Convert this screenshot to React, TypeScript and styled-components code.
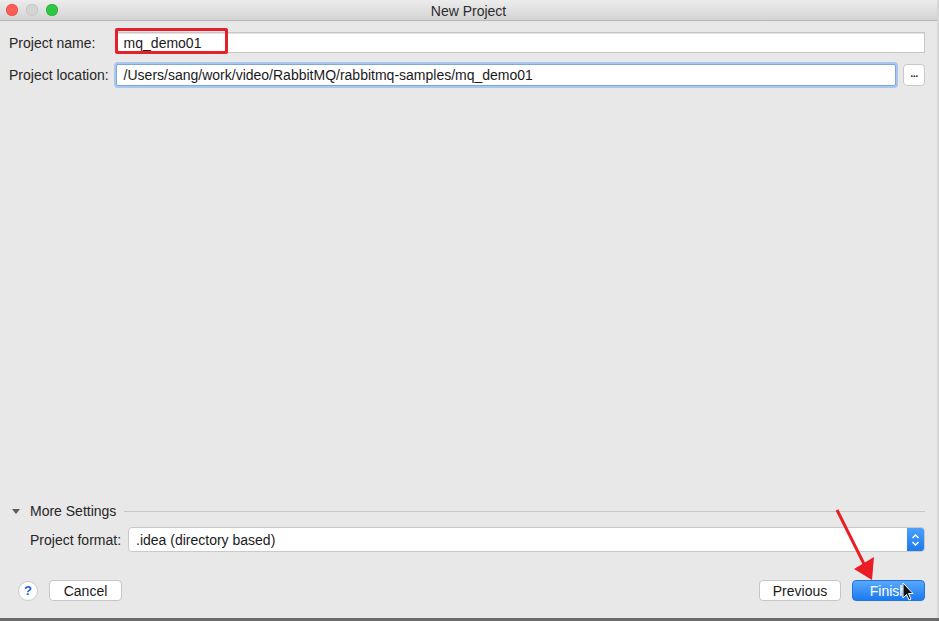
import React from 'react';
import styled, { createGlobalStyle } from 'styled-components';

const GlobalStyle = createGlobalStyle`
  html, body {
    margin: 0;
    padding: 0;
    background: #d6d6d6;
  }
  body {
    font-family: "Liberation Sans", Arial, sans-serif;
    font-size: 14px;
    color: #1e1e1e;
  }
`;

const Page = styled.div`
  position: relative;
  width: 939px;
  height: 621px;
  display: flex;
  flex-direction: column;
  overflow: hidden;
`;

const Window = styled.div`
  width: 937px;
  height: 618px;
  background: #e8e8e8;
  display: flex;
  flex-direction: column;
`;

const BottomEdge = styled.div`
  height: 3px;
  background: #6b6b6b;
`;

const TitleBar = styled.div`
  position: relative;
  height: 20px;
  flex-shrink: 0;
  background: linear-gradient(#ececec, #d4d4d4);
  border-bottom: 1px solid #b5b5b5;
  display: flex;
  align-items: center;
  justify-content: center;
`;

const Lights = styled.div`
  position: absolute;
  left: 6px;
  top: 4px;
  display: flex;
  gap: 8px;
`;

const Light = styled.span<{ color: string; border: string }>`
  width: 12px;
  height: 12px;
  border-radius: 50%;
  background: ${(p) => p.color};
  box-shadow: inset 0 0 0 0.5px ${(p) => p.border};
`;

const Title = styled.div`
  font-size: 14px;
  color: #2c2c2c;
  padding-top: 1px;
`;

const Content = styled.div`
  flex: 1;
  display: flex;
  flex-direction: column;
  padding: 11px 12px 0 9px;
`;

const FormGrid = styled.div`
  display: grid;
  grid-template-columns: auto 1fr 22px;
  column-gap: 7px;
  row-gap: 11px;
  align-items: center;
`;

const Label = styled.label`
  font-size: 14px;
  color: #262626;
  white-space: nowrap;
`;

const FieldWrap = styled.div<{ span?: boolean }>`
  position: relative;
  grid-column: ${(p) => (p.span ? '2 / 4' : '2 / 3')};
`;

const TextField = styled.div<{ focused?: boolean }>`
  height: ${(p) => (p.focused ? '20px' : '19px')};
  background: #fff;
  border: 1px solid ${(p) => (p.focused ? '#7fa8dc' : '#c6c6c6')};
  box-shadow: ${(p) => (p.focused ? '0 0 0 2px #a9c7ee' : 'inset 0 1px 0 #e2e2e2')};
  border-radius: ${(p) => (p.focused ? '2px' : '0')};
  display: flex;
  align-items: center;
  padding: 0 7px;
  font-size: 14px;
  color: #1a1a1a;
  white-space: nowrap;
`;

const Highlight = styled.div`
  position: absolute;
  left: -1px;
  top: -4px;
  width: 107px;
  height: 20px;
  border: 3px solid #e5202b;
  border-radius: 2px;
`;

const SmallButton = styled.button`
  width: 22px;
  height: 22px;
  padding: 0 0 6px;
  background: #fff;
  border: 1px solid #c9c9c9;
  border-radius: 4px;
  font-family: inherit;
  font-size: 11px;
  font-weight: bold;
  color: #333;
  line-height: 1;
  letter-spacing: -0.5px;
  display: flex;
  align-items: flex-end;
  justify-content: center;
`;

const Spacer = styled.div`
  flex: 1;
`;

const SectionHeader = styled.div`
  display: flex;
  align-items: center;
  gap: 6px;
  margin-left: 3px;
`;

const Triangle = styled.span`
  width: 0;
  height: 0;
  border-left: 4px solid transparent;
  border-right: 4px solid transparent;
  border-top: 5px solid #5a5a5a;
  margin-right: 4px;
`;

const SectionTitle = styled.span`
  font-size: 14px;
  color: #262626;
`;

const Rule = styled.div`
  flex: 1;
  height: 1px;
  background: #c6c6c6;
  margin-left: 2px;
`;

const FormatRow = styled.div`
  display: flex;
  align-items: center;
  gap: 7px;
  margin: 8px 0 0 21px;
`;

const Combo = styled.div`
  flex: 1;
  height: 23px;
  background: #fff;
  border: 1px solid #c9c9c9;
  border-radius: 4px;
  display: flex;
  align-items: center;
  overflow: hidden;
`;

const ComboText = styled.span`
  flex: 1;
  padding-left: 7px;
  font-size: 14px;
  color: #1a1a1a;
`;

const Stepper = styled.span`
  width: 17px;
  height: 100%;
  background: linear-gradient(#4ba0fb, #1c79ee);
  display: flex;
  align-items: center;
  justify-content: center;
`;

const Footer = styled.div`
  display: flex;
  align-items: center;
  gap: 11px;
  margin: 28px 0 17px 9px;
`;

const HelpButton = styled.span`
  width: 20px;
  height: 20px;
  border-radius: 50%;
  background: #fff;
  border: 1px solid #c9c9c9;
  box-sizing: border-box;
  display: flex;
  align-items: center;
  justify-content: center;
  font-weight: bold;
  font-size: 13px;
  color: #1d5bd6;
`;

const PushButton = styled.button<{ primary?: boolean; w: number }>`
  width: ${(p) => p.w}px;
  height: 21px;
  border-radius: 4px;
  border: 1px solid ${(p) => (p.primary ? '#1f72e0' : '#c6c6c6')};
  background: ${(p) => (p.primary ? 'linear-gradient(#5aa8fc, #1a7af2)' : '#fff')};
  color: ${(p) => (p.primary ? '#fff' : '#1a1a1a')};
  font-family: inherit;
  font-size: 14px;
  padding: 0;
`;

const FooterGap = styled.div`
  flex: 1;
`;

const Overlay = styled.svg`
  position: absolute;
  left: 0;
  top: 0;
  pointer-events: none;
`;

export default function App() {
  return (
    <Page>
      <GlobalStyle />
      <Window>
        <TitleBar>
          <Lights>
            <Light color="#fc5f57" border="#de4740" />
            <Light color="#d4d4d4" border="#bdbdbd" />
            <Light color="#2fc742" border="#22a532" />
          </Lights>
          <Title>New Project</Title>
        </TitleBar>
        <Content>
          <FormGrid>
            <Label>Project name:</Label>
            <FieldWrap span>
              <TextField>mq_demo01</TextField>
              <Highlight />
            </FieldWrap>
            <Label>Project location:</Label>
            <FieldWrap>
              <TextField focused>/Users/sang/work/video/RabbitMQ/rabbitmq-samples/mq_demo01</TextField>
            </FieldWrap>
            <SmallButton>...</SmallButton>
          </FormGrid>
          <Spacer />
          <SectionHeader>
            <Triangle />
            <SectionTitle>More Settings</SectionTitle>
            <Rule />
          </SectionHeader>
          <FormatRow>
            <Label>Project format:</Label>
            <Combo>
              <ComboText>.idea (directory based)</ComboText>
              <Stepper>
                <svg width="9" height="14" viewBox="0 0 9 14">
                  <path d="M1.5 5 L4.5 2 L7.5 5 M1.5 9 L4.5 12 L7.5 9" fill="none" stroke="#fff" strokeWidth="1.4" />
                </svg>
              </Stepper>
            </Combo>
          </FormatRow>
          <Footer>
            <HelpButton>?</HelpButton>
            <PushButton w={73}>Cancel</PushButton>
            <FooterGap />
            <PushButton w={82}>Previous</PushButton>
            <PushButton w={73} primary>
              Finish
            </PushButton>
          </Footer>
        </Content>
      </Window>
      <BottomEdge />
      <Overlay width="939" height="621">
        <line x1="837" y1="510" x2="865" y2="566" stroke="#ec1c24" strokeWidth="3" />
        <polygon points="872,580 854,569 874,557" fill="#ec1c24" />
        <path
          d="M903 583 L903 598 L906.5 594.5 L909 600 L911 599 L908.5 593.5 L913 593.5 Z"
          fill="#111"
          stroke="#fff"
          strokeWidth="1"
        />
      </Overlay>
    </Page>
  );
}
